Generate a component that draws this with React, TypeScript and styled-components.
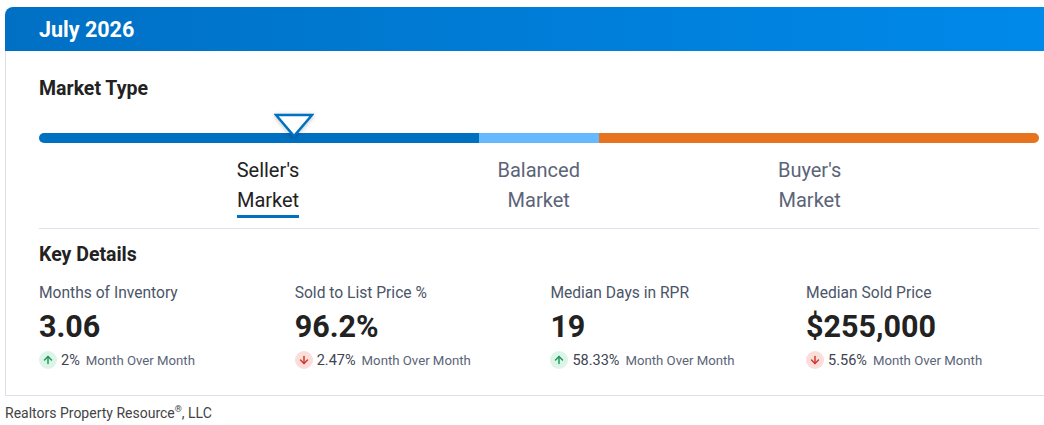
import styled, { createGlobalStyle } from "styled-components";
import { ArrowDown, ArrowUp } from "lucide-react";

const GlobalStyle = createGlobalStyle`
  body {
    margin: 0;
    font-family: Roboto, "Liberation Sans", sans-serif;
    color: #222;
    background: #fff;
    overflow: hidden;
  }
`;

const Page = styled.div`
  padding: 7px 0 0 5px;
`;

const Card = styled.div`
  width: 1069px;
`;

const Header = styled.div`
  height: 44px;
  display: flex;
  align-items: center;
  padding-left: 34px;
  border-radius: 8px 8px 0 0;
  background: linear-gradient(to right, #0070c4, #008aeb);
  color: #fff;
  font-size: 21.5px;
  font-weight: 700;
`;

const Body = styled.div`
  border: 1px solid #dde0e8;
  border-top: 0;
  padding: 0 34px 25px 33px;
`;

const SectionTitle = styled.h2<{ $top?: number }>`
  margin: 0;
  padding-top: ${(p) => p.$top ?? 0}px;
  font-size: 19.5px;
  line-height: 24px;
  font-weight: 700;
  color: #222;
`;

const Scale = styled.div`
  position: relative;
  width: 1000px;
  margin-top: 12px;
  padding-top: 20px;
`;

const Marker = styled.svg`
  position: absolute;
  top: 0;
  left: 235px;
  filter: drop-shadow(0 1px 2px rgba(0, 0, 0, 0.25));
`;

const Bar = styled.div`
  display: flex;
  height: 10px;
  border-radius: 5px;
  overflow: hidden;
`;

const Segment = styled.div<{ $grow: number; $color: string }>`
  flex: ${(p) => p.$grow} 0 0;
  background: ${(p) => p.$color};
`;

const Labels = styled.div`
  display: flex;
  justify-content: center;
  gap: 198px;
  width: 1000px;
  margin-top: 12px;
`;

const Label = styled.div<{ $active?: boolean }>`
  font-size: 20px;
  line-height: 30px;
  text-align: center;
  color: ${(p) => (p.$active ? "#222" : "#5b6478")};
  border-bottom: 3px solid ${(p) => (p.$active ? "#0070c0" : "transparent")};
`;

const Divider = styled.hr`
  width: 1000px;
  margin: 10px 0 14px;
  border: 0;
  border-top: 1px solid #dde3ee;
`;

const Stats = styled.div`
  display: grid;
  grid-template-columns: repeat(4, 255.7px);
  margin-top: 16px;
`;

const Stat = styled.div`
  display: flex;
  flex-direction: column;
`;

const StatLabel = styled.div`
  font-size: 15.6px;
  line-height: 20px;
  color: #4b5568;
`;

const StatValue = styled.div`
  margin-top: 6px;
  font-size: 30.5px;
  line-height: 36px;
  font-weight: 700;
  color: #222;
`;

const Change = styled.div`
  display: flex;
  align-items: center;
  margin-top: 5px;
  height: 20px;
`;

const Badge = styled.span<{ $up: boolean }>`
  display: inline-flex;
  align-items: center;
  justify-content: center;
  width: 18px;
  height: 18px;
  border-radius: 50%;
  background: ${(p) => (p.$up ? "#dcf5e8" : "#fbdedb")};
  color: ${(p) => (p.$up ? "#1b9a5c" : "#cf3a2b")};
`;

const Percent = styled.span`
  margin-left: 4px;
  font-size: 14.5px;
  color: #3d4453;
`;

const Period = styled.span`
  margin-left: 6px;
  font-size: 13.2px;
  color: #5b6478;
`;

const Footer = styled.div`
  margin-top: 4px;
  font-size: 14px;
  line-height: 18px;
  color: #444;

  sup {
    font-size: 9px;
  }
`;

const stats = [
  { label: "Months of Inventory", value: "3.06", pct: "2%", up: true },
  { label: "Sold to List Price %", value: "96.2%", pct: "2.47%", up: false },
  { label: "Median Days in RPR", value: "19", pct: "58.33%", up: true },
  { label: "Median Sold Price", value: "$255,000", pct: "5.56%", up: false },
];

export default function App() {
  return (
    <Page>
      <GlobalStyle />
      <Card>
        <Header>July 2026</Header>
        <Body>
          <SectionTitle $top={26}>Market Type</SectionTitle>
          <Scale>
            <Marker width="40" height="26" viewBox="0 0 40 26">
              <polygon
                points="2,2 38,2 20,23"
                fill="#fff"
                stroke="#0070c0"
                strokeWidth="2.5"
                strokeLinejoin="miter"
              />
            </Marker>
            <Bar>
              <Segment $grow={440} $color="#0070c0" />
              <Segment $grow={120} $color="#66b9ff" />
              <Segment $grow={440} $color="#e8731f" />
            </Bar>
          </Scale>
          <Labels>
            <Label $active>
              Seller's
              <br />
              Market
            </Label>
            <Label>
              Balanced
              <br />
              Market
            </Label>
            <Label>
              Buyer's
              <br />
              Market
            </Label>
          </Labels>
          <Divider />
          <SectionTitle>Key Details</SectionTitle>
          <Stats>
            {stats.map((s) => (
              <Stat key={s.label}>
                <StatLabel>{s.label}</StatLabel>
                <StatValue>{s.value}</StatValue>
                <Change>
                  <Badge $up={s.up}>
                    {s.up ? (
                      <ArrowUp size={12} strokeWidth={3} />
                    ) : (
                      <ArrowDown size={12} strokeWidth={3} />
                    )}
                  </Badge>
                  <Percent>{s.pct}</Percent>
                  <Period>Month Over Month</Period>
                </Change>
              </Stat>
            ))}
          </Stats>
        </Body>
      </Card>
      <Footer>
        Realtors Property Resource<sup>®</sup>, LLC
      </Footer>
    </Page>
  );
}
